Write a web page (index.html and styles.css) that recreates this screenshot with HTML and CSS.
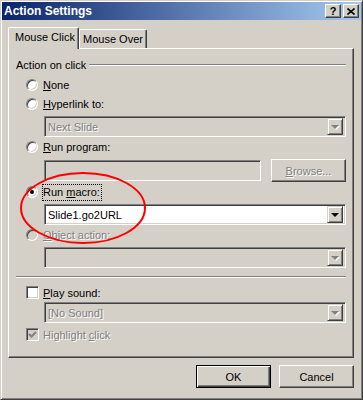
FILE: index.html
```html
<!DOCTYPE html>
<html>
<head>
<meta charset="utf-8">
<title>Action Settings</title>
<link rel="stylesheet" href="styles.css">
</head>
<body>
<div class="dialog">
    <div class="caption">
        <span class="caption-text">Action Settings</span>
        <span class="cap-btn help">?</span>
        <span class="cap-btn close"><svg width="8" height="7" viewBox="0 0 8 7"><path d="M0.5 0.5L7.5 6.5M7.5 0.5L0.5 6.5" stroke="#000" stroke-width="1.6" fill="none"/></svg></span>
    </div>

    <div class="tabs">
        <span class="tab active">Mouse Click</span>
        <span class="tab">Mouse Over</span>
    </div>

    <div class="panel">
        <div class="group-label">Action on click</div>

        <div class="opt first"><span class="radio"></span><span><u>N</u>one</span></div>
        <div class="opt"><span class="radio"></span><span><u>H</u>yperlink to:</span></div>
        <div class="combo disabled"><span class="value">Next Slide</span><span class="drop"></span></div>

        <div class="opt tight"><span class="radio"></span><span><u>R</u>un program:</span></div>
        <div class="program-row">
            <div class="textbox"></div>
            <span class="btn disabled browse"><span><u>B</u>rowse...</span></span>
        </div>

        <div class="opt tight"><span class="radio checked"></span><span class="focus">Run <u>m</u>acro:</span></div>
        <div class="combo"><span class="value">Slide1.go2URL</span><span class="drop"></span></div>

        <div class="opt tight"><span class="radio disabled"></span><span class="off"><u>O</u>bject action:</span></div>
        <div class="combo disabled"><span class="value"></span><span class="drop"></span></div>

        <div class="separator"></div>

        <div class="opt check-row"><span class="checkbox"></span><span><u>P</u>lay sound:</span></div>
        <div class="combo disabled near"><span class="value">[No Sound]</span><span class="drop"></span></div>
        <div class="opt check-row last"><span class="checkbox disabled"><svg width="9" height="9" viewBox="0 0 9 9"><path d="M1 4l2.5 2.5L8 2" stroke="#808080" stroke-width="2" fill="none"/></svg></span><span class="off">Highlight <u>c</u>lick</span></div>
    </div>

    <div class="buttons">
        <span class="btn default">OK</span>
        <span class="btn">Cancel</span>
    </div>

    <!-- red marker drawn over the dialog -->
    <svg class="marker" width="363" height="400" viewBox="0 0 363 400"><ellipse cx="82" cy="207" rx="62" ry="35" fill="none" stroke="#ff0000" stroke-width="2"/></svg>
</div>
</body>
</html>
```

FILE: styles.css
```css
body { margin: 0; background: #d4d0c8; }

.dialog { position: relative; width: 363px; height: 400px; box-sizing: border-box; padding: 1px; border: 1px solid; border-color: #d4d0c8 #404040 #404040 #d4d0c8; box-shadow: inset 1px 1px #fff, inset -1px -1px #808080; background: #d4d0c8; font: 11px "Liberation Sans", Arial, sans-serif; color: #000; display: flex; flex-direction: column; }

.caption { height: 18px; display: flex; align-items: center; padding: 0 2px; background: linear-gradient(to right, #0a246a, #a6caf0); }
.caption-text { flex: 1; color: #fff; font-weight: bold; font-size: 12px; }
.cap-btn { width: 16px; height: 14px; box-sizing: border-box; display: flex; align-items: center; justify-content: center; background: #d4d0c8; border: 1px solid; border-color: #fff #404040 #404040 #fff; box-shadow: inset -1px -1px #808080; font-weight: bold; font-size: 11px; line-height: 12px; }
.cap-btn.help { margin-right: 2px; }

.tabs { display: flex; align-items: flex-end; height: 21px; margin: 7px 0 0 6px; }
.tab { box-sizing: border-box; height: 19px; padding: 3px 0 0 3px; border: 1px solid; border-bottom: none; border-color: #fff #404040 #404040 #fff; border-radius: 2px 2px 0 0; box-shadow: inset -1px 0 #808080; background: #d4d0c8; white-space: nowrap; }
.tab.active { position: relative; z-index: 1; width: 71px; height: 22px; margin-bottom: -1px; padding: 3px 0 0 6px; }
.tab:not(.active) { width: 68px; margin-left: 0; }

.panel { height: 310px; box-sizing: border-box; margin: 0 7px 0 6px; padding: 0 7px; border: 1px solid; border-color: #fff #404040 #404040 #fff; box-shadow: inset -1px -1px #808080; display: flex; flex-direction: column; }

.group-label { display: flex; align-items: center; height: 14px; margin-top: 9px; white-space: nowrap; }
.group-label::after { content: ""; flex: 1; height: 0; margin-left: 3px; border-top: 1px solid #808080; border-bottom: 1px solid #fff; }

.opt { display: flex; align-items: center; height: 12px; line-height: 12px; margin-top: 7px; padding-left: 10px; white-space: nowrap; }
.opt.first { margin-top: 7px; }
.opt.tight { margin-top: 4px; }
.opt.check-row { height: 13px; margin-top: 8px; }
.opt.check-row.last { margin-top: 5px; }

.radio { width: 12px; height: 12px; box-sizing: border-box; margin-right: 5px; border-radius: 50%; border: 1px solid; border-color: #808080 #fff #fff #808080; box-shadow: inset 1px 1px #404040, inset -1px -1px #d4d0c8; background: #fff; display: flex; align-items: center; justify-content: center; }
.radio.checked::after { content: ""; width: 4px; height: 4px; border-radius: 50%; background: #000; }
.radio.disabled { background: #d4d0c8; }

.checkbox { width: 13px; height: 13px; box-sizing: border-box; margin-right: 4px; border: 1px solid; border-color: #808080 #fff #fff #808080; box-shadow: inset 1px 1px #404040, inset -1px -1px #d4d0c8; background: #fff; display: flex; align-items: center; justify-content: center; }
.checkbox.disabled { background: #d4d0c8; }

.focus { margin-left: -1px; padding: 1px 1px 1px 0; border: 1px dotted #000; line-height: 13px; }
.off, .disabled .value, .btn.disabled { color: #808080; text-shadow: 1px 1px 0 #fff; }

.combo { height: 21px; box-sizing: border-box; margin: 6px 0 0 28px; padding: 2px; border: 1px solid; border-color: #808080 #fff #fff #808080; box-shadow: inset 1px 1px #404040, inset -1px -1px #d4d0c8; background: #fff; display: flex; align-items: center; }
.combo.disabled { background: #d4d0c8; }
.combo.near { margin-top: 3px; }
.combo .value { flex: 1; padding-left: 1px; white-space: nowrap; }
.drop { width: 16px; height: 17px; box-sizing: border-box; background: #d4d0c8; border: 1px solid; border-color: #d4d0c8 #404040 #404040 #d4d0c8; box-shadow: inset 1px 1px #fff, inset -1px -1px #808080; display: flex; align-items: center; justify-content: center; }
.drop::after { content: ""; border: 4px solid transparent; border-top: 4px solid #000; border-bottom: none; margin-top: 1px; }
.combo.disabled .drop::after { border-top-color: #808080; filter: drop-shadow(1px 1px 0 #fff); }

.program-row { display: flex; align-items: center; height: 23px; margin: 6px 0 0 28px; }
.textbox { width: 217px; height: 21px; box-sizing: border-box; border: 1px solid; border-color: #808080 #fff #fff #808080; box-shadow: inset 1px 1px #404040, inset -1px -1px #d4d0c8; background: #d4d0c8; }
.program-row .browse { margin-left: auto; }

.separator { height: 0; margin-top: 8px; border-top: 1px solid #808080; border-bottom: 1px solid #fff; }

.buttons { display: flex; justify-content: flex-end; gap: 8px; margin: 7px 7px 0 0; }
.btn { width: 75px; height: 23px; box-sizing: border-box; display: flex; align-items: center; justify-content: center; border: 1px solid; border-color: #fff #404040 #404040 #fff; box-shadow: inset -1px -1px #808080; background: #d4d0c8; }
.btn.default { border-color: #000; box-shadow: inset 1px 1px #fff, inset -1px -1px #404040, inset -2px -2px #808080; }

.marker { position: absolute; left: 0; top: 0; pointer-events: none; }
```
